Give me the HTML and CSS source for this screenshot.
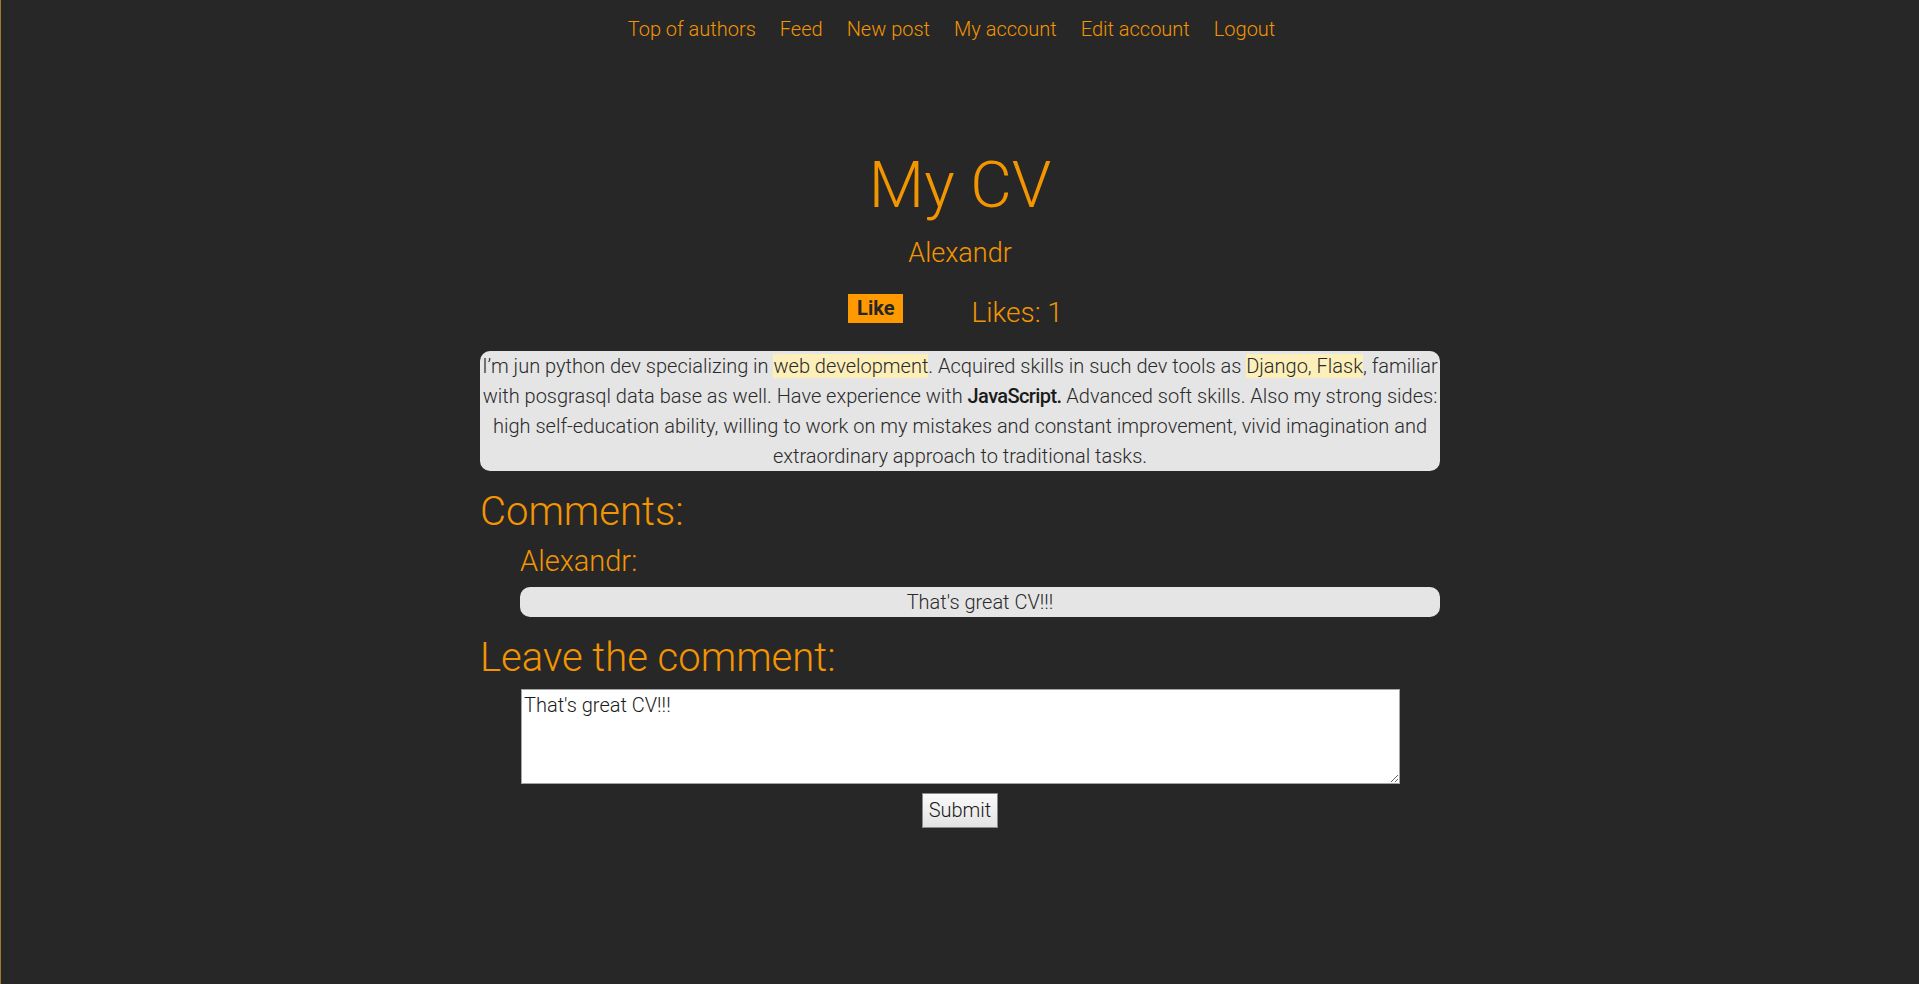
FILE: index.html
```html
<!DOCTYPE html>
<html lang="en">
<head>
<meta charset="utf-8">
<title>My CV</title>
<link rel="stylesheet" href="styles.css">
</head>
<body>
<nav class="topnav">
  <a class="topnav-link" href="#">Top of authors</a>
  <a class="topnav-link" href="#">Feed</a>
  <a class="topnav-link" href="#">New post</a>
  <a class="topnav-link" href="#">My account</a>
  <a class="topnav-link" href="#">Edit account</a>
  <a class="topnav-link" href="#">Logout</a>
</nav>
<main class="post">
  <h1 class="post-title">My CV</h1>
  <h2 class="post-author">Alexandr</h2>
  <div class="like-row">
    <button class="like-btn" type="button">Like</button>
    <span class="likes-count">Likes: 1</span>
  </div>
  <div class="post-body">I’m jun python dev specializing in <span class="hl">web development</span>. Acquired skills in such dev tools as <span class="hl">Django, Flask</span>, familiar with posgrasql data base as well. Have experience with <strong class="strong">JavaScript.</strong> Advanced soft skills. Also my strong sides: high self-education ability, willing to work on my mistakes and constant improvement, vivid imagination and extraordinary approach to traditional tasks.</div>
  <h2 class="section-title">Comments:</h2>
  <ul class="comments">
    <li class="comment">
      <h3 class="comment-author">Alexandr:</h3>
      <div class="comment-text">That's great CV!!!</div>
    </li>
  </ul>
  <h2 class="section-title section-title-leave">Leave the comment:</h2>
  <form class="comment-form">
    <textarea class="comment-input">That's great CV!!!</textarea>
    <button class="submit-btn" type="submit">Submit</button>
  </form>
</main>
</body>
</html>
```
FILE: styles.css
```css
html, body {
  height: 100%;
}
body {
  margin: 0;
  background: #272727;
  border-left: 1px solid #a07a2c;
  font-family: Roboto, "Liberation Sans", sans-serif;
  color: #f39500;
  box-sizing: border-box;
  min-height: 984px;
}
.topnav {
  display: flex;
  justify-content: center;
  gap: 24px;
  padding: 17px 17px 0 0;
  font-size: 20px;
  line-height: 24px;
  font-weight: 300;
}
.topnav-link {
  color: #f39500;
  text-decoration: none;
}
.post {
  width: 960px;
  margin: 0 auto;
}
.post-title {
  margin: 107px 0 0;
  font-size: 64px;
  line-height: 75px;
  font-weight: 300;
  text-align: center;
}
.post-author {
  margin: 14px 0 0;
  font-size: 27px;
  line-height: 32px;
  font-weight: 300;
  text-align: center;
}
.like-row {
  display: flex;
  justify-content: center;
  align-items: flex-start;
  gap: 68px;
  margin-top: 25px;
  padding-right: 9px;
}
.like-btn {
  background: #ff9900;
  border: none;
  padding: 3px 9px;
  margin: 0;
  font-family: Roboto, "Liberation Sans", sans-serif;
  font-size: 20px;
  line-height: 23px;
  font-weight: 700;
  color: #262626;
}
.likes-count {
  margin-top: 2px;
  font-size: 28px;
  line-height: 33px;
  font-weight: 300;
}
.post-body {
  margin-top: 22px;
  background: #e5e5e5;
  border-radius: 10px;
  color: #2a2a2a;
  font-size: 20px;
  line-height: 30px;
  font-weight: 300;
  text-align: center;
  padding: 0;
}
.hl {
  background: #fcefb9;
}
.strong {
  font-weight: 500;
  letter-spacing: -0.6px;
  color: #1a1a1a;
}
.section-title {
  margin: 17px 0 0;
  font-size: 40px;
  line-height: 47px;
  font-weight: 300;
}
.comments {
  list-style: none;
  margin: 0;
  padding: 0 0 0 40px;
}
.comment-author {
  margin: 9px 0 0;
  font-size: 29px;
  line-height: 34px;
  font-weight: 300;
}
.comment-text {
  margin-top: 9px;
  background: #e5e5e5;
  border-radius: 10px;
  color: #2a2a2a;
  font-size: 20px;
  line-height: 30px;
  font-weight: 300;
  text-align: center;
}
.comment-form {
  display: flex;
  flex-direction: column;
  align-items: center;
}
.comment-input {
  display: block;
  align-self: flex-start;
  box-sizing: border-box;
  width: 879px;
  height: 95px;
  margin: 8px 0 0 41px;
  padding: 3px 2px;
  border: 1px solid #a5a5a5;
  background: #fff;
  font-family: Roboto, "Liberation Sans", sans-serif;
  font-size: 20px;
  line-height: 25px;
  font-weight: 300;
  color: #1a1a1a;
}
.submit-btn {
  margin-top: 9px;
  padding: 5px 6px;
  border: 1px solid #8a8a8a;
  border-radius: 0;
  background: linear-gradient(#fbfbfb, #e3e3e3);
  font-family: Roboto, "Liberation Sans", sans-serif;
  font-size: 20px;
  line-height: 23px;
  font-weight: 300;
  color: #1a1a1a;
}
```
